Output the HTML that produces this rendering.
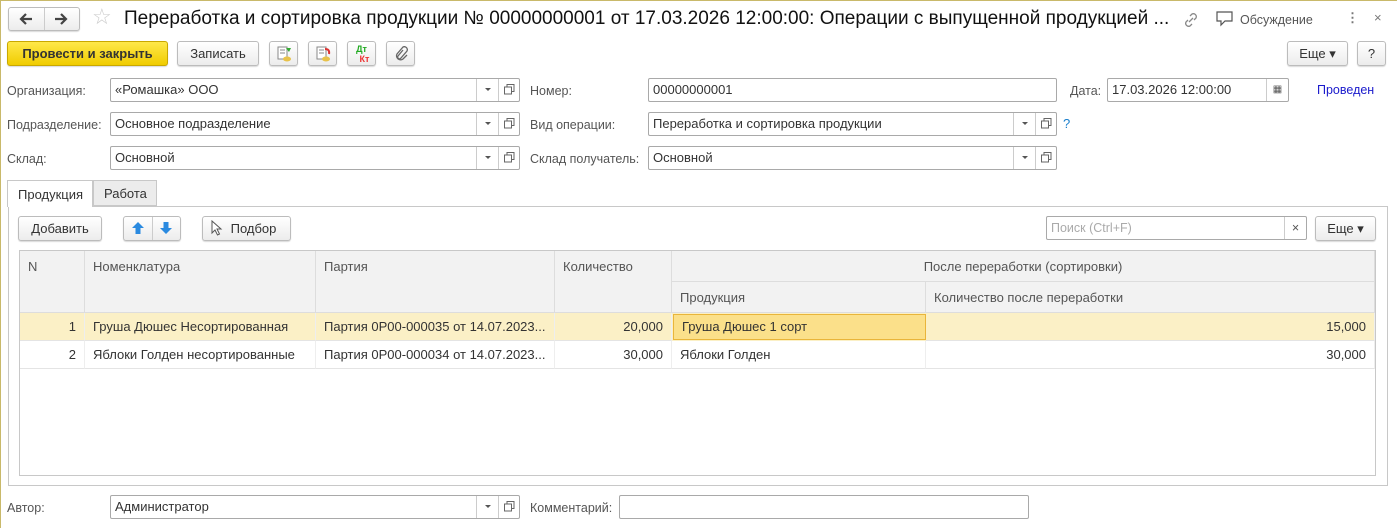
<!DOCTYPE html><html><head><meta charset="utf-8"><style>
*{box-sizing:border-box;margin:0;padding:0}
body{width:1397px;height:528px;background:#fff;font-family:"Liberation Sans",sans-serif;font-size:13px;color:#333;position:relative;overflow:hidden}
.frame{position:absolute;left:0;top:0;width:1397px;height:528px;border-top:1px solid #c9b96a;border-left:1px solid #c9b96a}
.a{position:absolute;white-space:nowrap}
.btn{position:absolute;border:1px solid #bcbcbc;border-radius:3px;background:linear-gradient(#fff,#ececec);box-shadow:0 1px 1px rgba(0,0,0,.15);text-align:center;line-height:23px;height:25px;color:#333}
.fld{position:absolute;border:1px solid #a9a9a9;border-radius:2px;height:24px;line-height:22px;padding-left:4px;color:#333;background:#fff}
.dd{position:absolute;top:0;right:21px;width:22px;height:22px;border-left:1px solid #ccc}
.dd:after{content:"";position:absolute;left:8px;top:9px;border:3px solid transparent;border-top:3px solid #555}
.op{position:absolute;top:0;right:0;width:21px;height:22px;border-left:1px solid #ccc}
.op svg{position:absolute;left:5px;top:5px}
.lbl{position:absolute;color:#555;font-size:12.5px;margin-top:2px}
.th{position:absolute;background:#f2f2f2;border-right:1px solid #ddd;border-bottom:1px solid #ddd;color:#555;padding:8px}
.td{position:absolute;height:28px;line-height:28px;padding:0 8px;border-right:1px solid #eee;border-bottom:1px solid #e4e4e4;overflow:hidden}
</style></head><body>
<div class="frame"></div>
<div class="btn" style="left:8px;top:7px;width:72px;height:24px"></div>
<div class="a" style="left:44px;top:8px;width:1px;height:22px;background:#ccc"></div>
<svg class="a" style="left:18px;top:12px" width="16" height="14" viewBox="0 0 16 14"><path d="M14 7H3M8 2L3 7l5 5" stroke="#444" stroke-width="2.2" fill="none"/></svg>
<svg class="a" style="left:53px;top:12px" width="16" height="14" viewBox="0 0 16 14"><path d="M2 7h11M8 2l5 5-5 5" stroke="#444" stroke-width="2.2" fill="none"/></svg>
<div class="a" style="left:92px;top:4px;font-size:22px;color:#ccc">☆</div>
<div class="a" style="left:124px;top:8px;font-size:19px;color:#111">Переработка и сортировка продукции № 00000000001 от 17.03.2026 12:00:00: Операции с выпущенной продукцией ...</div>
<svg class="a" style="left:1183px;top:12px" width="16" height="16" viewBox="0 0 16 16" fill="none" stroke="#888" stroke-width="1.3"><path d="M6 10l4-4M7 4l2-2a3 3 0 014 4l-2 2M9 12l-2 2a3 3 0 01-4-4l2-2"/></svg>
<svg class="a" style="left:1216px;top:11px" width="18" height="16" viewBox="0 0 18 16" fill="none" stroke="#555" stroke-width="1.2"><path d="M1 1h15v9H9l-4 4v-4H1z"/></svg>
<div class="a" style="left:1240px;top:13px;color:#555;font-size:12.5px">Обсуждение</div>
<div class="a" style="left:1346px;top:10px;color:#777;font-weight:bold">⋮</div>
<div class="a" style="left:1374px;top:10px;color:#777">×</div>

<div class="btn" style="left:7px;top:41px;width:161px;background:linear-gradient(#ffe84a,#f0cc00);border-color:#c9a800;font-weight:bold;color:#333">Провести и закрыть</div>
<div class="btn" style="left:177px;top:41px;width:82px">Записать</div>
<div class="btn" style="left:269px;top:41px;width:29px"><svg width="18" height="18" viewBox="0 0 18 18" style="margin-top:3px"><rect x="3" y="2" width="9" height="12" fill="#fff" stroke="#888"/><path d="M5 5h5M5 8h5" stroke="#888"/><ellipse cx="12" cy="14" rx="4" ry="2.5" fill="#e8c24a"/><path d="M11 3h5l-2 4z" fill="#3a3"/></svg></div>
<div class="btn" style="left:308px;top:41px;width:29px"><svg width="18" height="18" viewBox="0 0 18 18" style="margin-top:3px"><rect x="3" y="2" width="9" height="12" fill="#fff" stroke="#888"/><path d="M5 5h5M5 8h5" stroke="#888"/><ellipse cx="12" cy="14" rx="4" ry="2.5" fill="#e8c24a"/><path d="M11 4q5 0 4 5" stroke="#d33" stroke-width="2" fill="none"/></svg></div>
<div class="btn" style="left:347px;top:41px;width:29px;font-size:9px;line-height:10px;font-weight:bold;padding-top:2px"><span style="color:#2a2">Дт</span><br><span style="color:#e33;margin-left:6px">Кт</span></div>
<div class="btn" style="left:386px;top:41px;width:29px"><svg width="14" height="16" viewBox="0 0 14 16" style="margin-top:4px"><path d="M9 4L4 10a1.8 1.8 0 003 2l6-7a3 3 0 00-4-4L3 8a4 4 0 006 5l4-4" stroke="#666" stroke-width="1.3" fill="none"/></svg></div>
<div class="btn" style="left:1287px;top:41px;width:61px">Еще ▾</div>
<div class="btn" style="left:1357px;top:41px;width:29px">?</div>

<div class="lbl" style="left:7px;top:82px">Организация:</div>
<div class="fld" style="left:110px;top:78px;width:410px">«Ромашка» ООО<div class="dd"></div><div class="op"><svg width="11" height="11"><rect x="3" y=".5" width="7" height="7" fill="none" stroke="#666"/><rect x=".5" y="3" width="7" height="7" fill="#fff" stroke="#666"/></svg></div></div>
<div class="lbl" style="left:7px;top:116px">Подразделение:</div>
<div class="fld" style="left:110px;top:112px;width:410px">Основное подразделение<div class="dd"></div><div class="op"><svg width="11" height="11"><rect x="3" y=".5" width="7" height="7" fill="none" stroke="#666"/><rect x=".5" y="3" width="7" height="7" fill="#fff" stroke="#666"/></svg></div></div>
<div class="lbl" style="left:7px;top:150px">Склад:</div>
<div class="fld" style="left:110px;top:146px;width:410px">Основной<div class="dd"></div><div class="op"><svg width="11" height="11"><rect x="3" y=".5" width="7" height="7" fill="none" stroke="#666"/><rect x=".5" y="3" width="7" height="7" fill="#fff" stroke="#666"/></svg></div></div>

<div class="lbl" style="left:530px;top:82px">Номер:</div>
<div class="fld" style="left:648px;top:78px;width:409px">00000000001</div>
<div class="lbl" style="left:1070px;top:82px">Дата:</div>
<div class="fld" style="left:1107px;top:78px;width:182px">17.03.2026 12:00:00<div style="position:absolute;right:0;top:0;width:22px;height:22px;border-left:1px solid #ccc;text-align:center;font-size:10px;color:#555">▦</div></div>
<div class="a" style="left:1317px;top:83px;color:#1a1acc;font-size:12.5px">Проведен</div>
<div class="lbl" style="left:530px;top:116px">Вид операции:</div>
<div class="fld" style="left:648px;top:112px;width:409px">Переработка и сортировка продукции<div class="dd"></div><div class="op"><svg width="11" height="11"><rect x="3" y=".5" width="7" height="7" fill="none" stroke="#666"/><rect x=".5" y="3" width="7" height="7" fill="#fff" stroke="#666"/></svg></div></div>
<div class="a" style="left:1063px;top:116px;color:#1a7fcc">?</div>
<div class="lbl" style="left:530px;top:150px">Склад получатель:</div>
<div class="fld" style="left:648px;top:146px;width:409px">Основной<div class="dd"></div><div class="op"><svg width="11" height="11"><rect x="3" y=".5" width="7" height="7" fill="none" stroke="#666"/><rect x=".5" y="3" width="7" height="7" fill="#fff" stroke="#666"/></svg></div></div>

<div class="a" style="left:8px;top:206px;width:1380px;height:280px;border:1px solid #c8c8c8"></div>
<div class="a" style="left:7px;top:180px;width:86px;height:27px;background:#fff;border:1px solid #c8c8c8;border-bottom:none;padding:6px 10px">Продукция</div>
<div class="a" style="left:93px;top:180px;width:64px;height:26px;background:#ececec;border:1px solid #c8c8c8;padding:5px 10px">Работа</div>

<div class="btn" style="left:18px;top:216px;width:84px">Добавить</div>
<div class="btn" style="left:123px;top:216px;width:58px"></div>
<div class="a" style="left:152px;top:217px;width:1px;height:23px;background:#ccc"></div>
<svg class="a" style="left:131px;top:221px" width="14" height="14" viewBox="0 0 14 14"><path d="M7 1L1 7h3.5v6h5V7H13z" fill="#2a8ae0"/></svg>
<svg class="a" style="left:159px;top:221px" width="14" height="14" viewBox="0 0 14 14"><path d="M7 13L1 7h3.5V1h5v6H13z" fill="#2a8ae0"/></svg>
<div class="btn" style="left:202px;top:216px;width:89px;padding-left:14px">Подбор</div>
<svg class="a" style="left:211px;top:220px" width="12" height="16" viewBox="0 0 12 16"><path d="M1 1v12l3-3 2.5 5 2-1-2.5-5H10z" fill="#fff" stroke="#555"/></svg>
<div class="fld" style="left:1046px;top:216px;width:261px;color:#aaa;font-size:12.5px">Поиск (Ctrl+F)<div style="position:absolute;right:0;top:0;width:22px;border-left:1px solid #ccc;text-align:center;color:#555">×</div></div>
<div class="btn" style="left:1315px;top:216px;width:61px">Еще ▾</div>

<div class="a" style="left:19px;top:250px;width:1357px;height:226px;border:1px solid #c8c8c8"></div>
<div class="th" style="left:20px;top:251px;width:65px;height:62px">N</div>
<div class="th" style="left:85px;top:251px;width:231px;height:62px">Номенклатура</div>
<div class="th" style="left:316px;top:251px;width:239px;height:62px">Партия</div>
<div class="th" style="left:555px;top:251px;width:117px;height:62px">Количество</div>
<div class="th" style="left:672px;top:251px;width:703px;height:31px;text-align:center">После переработки (сортировки)</div>
<div class="th" style="left:672px;top:282px;width:254px;height:31px">Продукция</div>
<div class="th" style="left:926px;top:282px;width:449px;height:31px">Количество после переработки</div>

<div class="a" style="left:20px;top:313px;width:1355px;height:28px;background:#fbf0c6"></div>
<div class="td" style="left:20px;top:313px;width:65px;text-align:right">1</div>
<div class="td" style="left:85px;top:313px;width:231px">Груша Дюшес Несортированная</div>
<div class="td" style="left:316px;top:313px;width:239px">Партия 0P00-000035 от 14.07.2023...</div>
<div class="td" style="left:555px;top:313px;width:117px;text-align:right">20,000</div>
<div class="td" style="left:673px;top:314px;width:253px;height:26px;line-height:24px;background:#fbe08a;border:1px solid #e9b53a">Груша Дюшес 1 сорт</div>
<div class="td" style="left:926px;top:313px;width:449px;text-align:right">15,000</div>
<div class="td" style="left:20px;top:341px;width:65px;text-align:right">2</div>
<div class="td" style="left:85px;top:341px;width:231px">Яблоки Голден несортированные</div>
<div class="td" style="left:316px;top:341px;width:239px">Партия 0P00-000034 от 14.07.2023...</div>
<div class="td" style="left:555px;top:341px;width:117px;text-align:right">30,000</div>
<div class="td" style="left:672px;top:341px;width:254px">Яблоки Голден</div>
<div class="td" style="left:926px;top:341px;width:449px;text-align:right">30,000</div>

<div class="lbl" style="left:7px;top:499px">Автор:</div>
<div class="fld" style="left:110px;top:495px;width:410px">Администратор<div class="dd"></div><div class="op"><svg width="11" height="11"><rect x="3" y=".5" width="7" height="7" fill="none" stroke="#666"/><rect x=".5" y="3" width="7" height="7" fill="#fff" stroke="#666"/></svg></div></div>
<div class="lbl" style="left:530px;top:499px">Комментарий:</div>
<div class="fld" style="left:619px;top:495px;width:410px"></div>
</body></html>
